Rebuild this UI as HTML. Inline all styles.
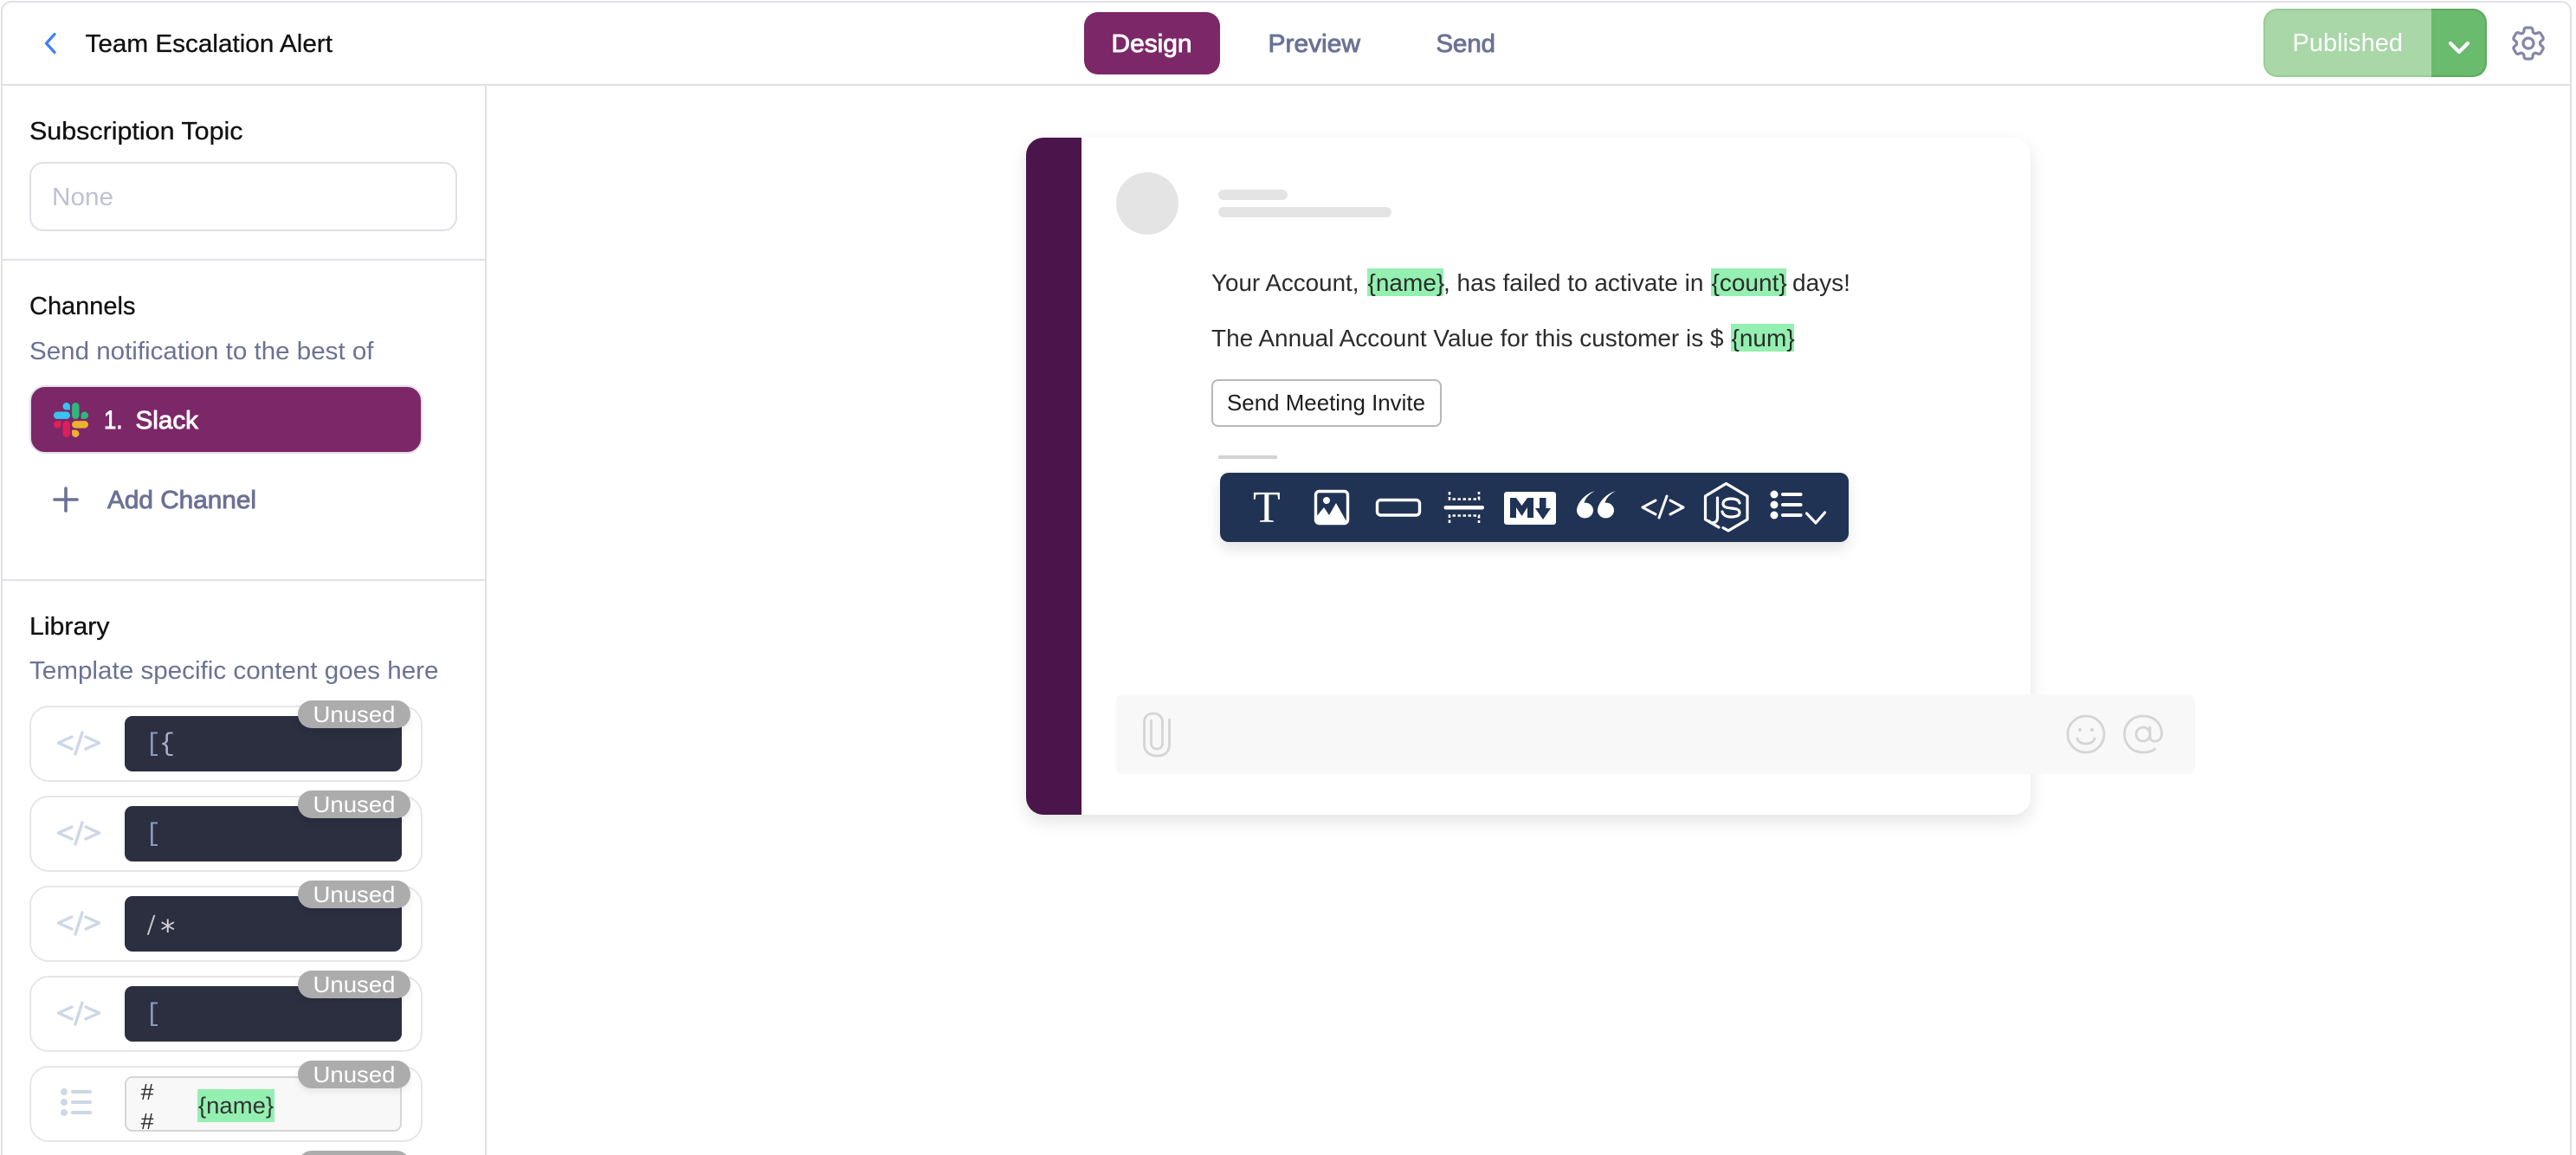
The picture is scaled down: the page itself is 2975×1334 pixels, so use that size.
<!DOCTYPE html>
<html lang="en">
<head>
<meta charset="utf-8">
<title>Team Escalation Alert</title>
<style>
html,body{margin:0;padding:0;background:#fff;width:2975px;height:1334px;overflow:hidden}
.a{position:absolute;box-sizing:border-box}
#root{position:relative;width:2975px;height:1334px;overflow:hidden;background:#fff}
.c{left:34px;width:454px;height:88px;border:2px solid #e6e6e8;border-radius:22px;background:#fff}
.d{left:144px;width:320px;height:64px;background:#2b2f40;border-radius:9px}
.b{left:344px;width:130px;height:32px;background:#acacac;border-radius:16px;box-shadow:0 4px 8px rgba(0,0,0,.08)}
svg text{font-family:"Liberation Sans",sans-serif}
.m{font-family:"Liberation Mono",monospace !important}
.reg{stroke:currentColor;stroke-width:.3}
.med{stroke:currentColor;stroke-width:.9}
</style>
</head>
<body>
<div id="root">
  <!-- app frame -->
  <div class="a" style="left:1px;top:1px;width:2969px;height:1333px;border:2px solid #e0e0e8;border-bottom:0;border-radius:12px 12px 0 0"></div>
  <div class="a" style="left:2px;top:97px;width:2967px;height:2px;background:#e0e0e8"></div>
  <div class="a" style="left:560px;top:98px;width:2px;height:1236px;background:#e0e0e8"></div>
  <div class="a" style="left:2px;top:299px;width:558px;height:2px;background:#e0e0e8"></div>
  <div class="a" style="left:2px;top:669px;width:558px;height:2px;background:#e0e0e8"></div>

  <!-- header -->
  <div class="a" style="left:1252px;top:14px;width:157px;height:72px;background:#7c2767;border-radius:16px"></div>
  <div class="a" style="left:2614px;top:10px;width:195px;height:79px;background:#a9d7a8;border:2px solid #97cd97;border-right:0;border-radius:16px 0 0 16px"></div>
  <div class="a" style="left:2808px;top:10px;width:64px;height:79px;background:#6abb6d;border:2px solid #5eaa60;border-left:0;border-radius:0 16px 16px 0"></div>

  <!-- sidebar -->
  <div class="a" style="left:34px;top:187px;width:494px;height:80px;border:2px solid #e0e0e8;border-radius:16px"></div>
  <div class="a" style="left:34px;top:445px;width:454px;height:79px;background:#7c2767;border:2px solid #e0e0e8;border-radius:18px"></div>

  <div class="a c" style="top:815px"></div>
  <div class="a c" style="top:919px"></div>
  <div class="a c" style="top:1023px"></div>
  <div class="a c" style="top:1127px"></div>
  <div class="a c" style="top:1231px"></div>
  <div class="a d" style="top:827px"></div>
  <div class="a d" style="top:931px"></div>
  <div class="a d" style="top:1035px"></div>
  <div class="a d" style="top:1139px"></div>
  <div class="a" style="left:144px;top:1243px;width:320px;height:64px;background:#f8f8f8;border:2px solid #d6d6d6;border-radius:9px"></div>
  <div class="a" style="left:228px;top:1258px;width:89px;height:38px;background:#93f0b0"></div>
  <div class="a b" style="top:809px"></div>
  <div class="a b" style="top:913px"></div>
  <div class="a b" style="top:1017px"></div>
  <div class="a b" style="top:1121px"></div>
  <div class="a b" style="top:1225px"></div>
  <div class="a" style="left:340px;top:1329px;width:140px;height:5px;overflow:hidden">
    <div class="a" style="left:4px;top:0;width:130px;height:32px;background:#acacac;border-radius:16px"></div>
  </div>

  <!-- slack card -->
  <div class="a" style="left:1185px;top:159px;width:1160px;height:782px;background:#fff;border-radius:20px;box-shadow:0 8px 20px rgba(0,0,0,.11)">
    <div class="a" style="left:0;top:0;width:64px;height:782px;background:#4a154b;border-radius:20px 0 0 20px"></div>
    <div class="a" style="left:104px;top:40px;width:72px;height:72px;background:#e4e4e4;border-radius:50%"></div>
    <div class="a" style="left:222px;top:60px;width:80px;height:12px;background:#e4e4e4;border-radius:6px"></div>
    <div class="a" style="left:222px;top:80px;width:200px;height:12px;background:#e4e4e4;border-radius:6px"></div>
  </div>
  <div class="a" style="left:1579px;top:310px;width:88px;height:32px;background:#93f0b0"></div>
  <div class="a" style="left:1976px;top:310px;width:87px;height:32px;background:#93f0b0"></div>
  <div class="a" style="left:1999px;top:374px;width:73px;height:32px;background:#93f0b0"></div>
  <div class="a" style="left:1399px;top:438px;width:266px;height:55px;border:2px solid #b8b8b8;border-radius:8px;background:#fff"></div>
  <div class="a" style="left:1407px;top:526px;width:68px;height:4px;background:#d4d4d4"></div>
  <div class="a" style="left:1409px;top:546px;width:726px;height:80px;background:#203354;border-radius:10px;box-shadow:0 8px 16px rgba(0,0,0,.11)"></div>
  <div class="a" style="left:1289px;top:802px;width:1246px;height:92px;background:#f8f8f8;border-radius:8px"></div>

  <svg class="a" style="left:0;top:0;display:block" width="2975" height="1334" viewBox="0 0 2975 1334" xmlns="http://www.w3.org/2000/svg">
    <!-- header -->
    <path d="M63 39.5 53.5 50 63 60.5" fill="none" stroke="#3b82f6" stroke-width="3.2" stroke-linecap="round" stroke-linejoin="round"/>
    <g style="color:#111"><text class="reg" x="98.500" y="60" font-size="29" fill="#111" textLength="285.500" lengthAdjust="spacingAndGlyphs">Team Escalation Alert</text></g>
    <g style="color:#fff"><text class="med" x="1283.500" y="60" font-size="29" fill="#fff" textLength="93" lengthAdjust="spacingAndGlyphs">Design</text></g>
    <g style="color:#6b7294">
      <text class="med" x="1464.500" y="60" font-size="29" fill="#6b7294" textLength="106.500" lengthAdjust="spacingAndGlyphs">Preview</text>
      <text class="med" x="1658.500" y="60" font-size="29" fill="#6b7294" textLength="68.500" lengthAdjust="spacingAndGlyphs">Send</text>
    </g>
    <text x="2647.500" y="59" font-size="29" fill="#fff" textLength="127.500" lengthAdjust="spacingAndGlyphs">Published</text>
    <path d="M2830 50 2840 60 2850 50" fill="none" stroke="#fff" stroke-width="4.2" stroke-linecap="round" stroke-linejoin="round"/>
    <g transform="translate(2896 26) scale(2)" fill="none" stroke="#8586a8" stroke-width="1.6" stroke-linecap="round" stroke-linejoin="round">
      <path d="M9.594 3.94c.09-.542.56-.94 1.11-.94h2.593c.55 0 1.02.398 1.11.94l.213 1.281c.063.374.313.686.645.87.074.04.147.083.22.127.324.196.72.257 1.075.124l1.217-.456a1.125 1.125 0 011.37.49l1.296 2.247a1.125 1.125 0 01-.26 1.431l-1.003.827c-.293.24-.438.613-.431.992a6.759 6.759 0 010 .255c-.007.378.138.75.43.99l1.005.828c.424.35.534.954.26 1.43l-1.298 2.247a1.125 1.125 0 01-1.369.491l-1.217-.456c-.355-.133-.75-.072-1.076.124a6.57 6.57 0 01-.22.128c-.331.183-.581.495-.644.869l-.213 1.28c-.09.543-.56.941-1.11.941h-2.594c-.55 0-1.02-.398-1.11-.94l-.213-1.281c-.062-.374-.312-.686-.644-.87a6.52 6.52 0 01-.22-.127c-.325-.196-.72-.257-1.076-.124l-1.217.456a1.125 1.125 0 01-1.369-.49l-1.297-2.247a1.125 1.125 0 01.26-1.431l1.004-.827c.292-.24.437-.613.43-.992a6.932 6.932 0 010-.255c.007-.378-.138-.75-.43-.99l-1.004-.828a1.125 1.125 0 01-.26-1.43l1.297-2.247a1.125 1.125 0 011.37-.491l1.216.456c.356.133.751.072 1.076-.124.072-.044.146-.087.22-.128.332-.183.582-.495.644-.869l.214-1.281z"/>
      <circle cx="12" cy="12" r="3"/>
    </g>

    <!-- sidebar text -->
    <g style="color:#111">
      <text class="reg" x="34" y="161" font-size="29" fill="#111" textLength="246.500" lengthAdjust="spacingAndGlyphs">Subscription Topic</text>
      <text class="reg" x="34" y="363" font-size="29" fill="#111" textLength="122.500" lengthAdjust="spacingAndGlyphs">Channels</text>
      <text class="reg" x="34" y="733" font-size="29" fill="#111" textLength="92.500" lengthAdjust="spacingAndGlyphs">Library</text>
    </g>
    <text x="60" y="237" font-size="29" fill="#bfc0d4" textLength="71" lengthAdjust="spacingAndGlyphs">None</text>
    <text x="34" y="415" font-size="29" fill="#6b7294" textLength="397.500" lengthAdjust="spacingAndGlyphs">Send notification to the best of</text>

    <g transform="translate(62 465) scale(.3257)">
      <path fill="#e01e5a" d="M25.8 77.6c0 7.1-5.8 12.9-12.9 12.9S0 84.7 0 77.6s5.8-12.9 12.9-12.9h12.9v12.9zM32.3 77.6c0-7.1 5.8-12.9 12.9-12.9s12.9 5.8 12.9 12.9v32.3c0 7.1-5.8 12.9-12.9 12.9s-12.9-5.8-12.9-12.9V77.6z"/>
      <path fill="#36c5f0" d="M45.2 25.8c-7.1 0-12.9-5.8-12.9-12.9S38.1 0 45.2 0s12.9 5.8 12.9 12.9v12.9H45.2zM45.2 32.3c7.1 0 12.9 5.8 12.9 12.9s-5.8 12.9-12.9 12.9H12.9C5.8 58.1 0 52.3 0 45.2s5.8-12.9 12.9-12.9h32.3z"/>
      <path fill="#2eb67d" d="M97 45.2c0-7.1 5.8-12.9 12.9-12.9s12.9 5.8 12.9 12.9-5.8 12.9-12.9 12.9H97V45.2zM90.5 45.2c0 7.1-5.8 12.9-12.9 12.9s-12.9-5.8-12.9-12.9V12.9C64.7 5.8 70.5 0 77.6 0s12.9 5.8 12.9 12.9v32.3z"/>
      <path fill="#ecb22e" d="M77.6 97c7.1 0 12.9 5.8 12.9 12.9s-5.8 12.9-12.9 12.9-12.9-5.8-12.9-12.9V97h12.9zM77.6 90.5c-7.1 0-12.9-5.8-12.9-12.9s5.8-12.9 12.9-12.9h32.3c7.1 0 12.9 5.8 12.9 12.9s-5.8 12.9-12.9 12.9H77.6z"/>
    </g>
    <g style="color:#fff">
      <text class="med" x="120" y="495" font-size="30" fill="#fff" textLength="21.500" lengthAdjust="spacingAndGlyphs">1.</text>
      <text class="med" x="156.500" y="495" font-size="29" fill="#fff" textLength="72.500" lengthAdjust="spacingAndGlyphs">Slack</text>
    </g>
    <path d="M76 564V590M63 577H89" fill="none" stroke="#6b7294" stroke-width="3.6" stroke-linecap="round"/>
    <g style="color:#6b7294"><text class="med" x="124" y="587" font-size="29" fill="#6b7294" textLength="172" lengthAdjust="spacingAndGlyphs">Add Channel</text></g>

    <text x="34" y="784" font-size="29" fill="#6b7294" textLength="472.500" lengthAdjust="spacingAndGlyphs">Template specific content goes here</text>

    <!-- code icons -->
    <g fill="none" stroke="#cdd7e5" stroke-width="3.4" stroke-linecap="round" stroke-linejoin="round">
      <path d="M83 851 67.500 858 83 865M95 846 87 871M99 851 114.500 858 99 865"/>
      <path d="M83 955 67.500 962 83 969M95 950 87 975M99 955 114.500 962 99 969"/>
      <path d="M83 1059 67.500 1066 83 1073M95 1054 87 1079M99 1059 114.500 1066 99 1073"/>
      <path d="M83 1163 67.500 1170 83 1177M95 1158 87 1183M99 1163 114.500 1170 99 1177"/>
    </g>
    <!-- list icon -->
    <g fill="#cdd7e5">
      <circle cx="74" cy="1261" r="4"/><circle cx="74" cy="1273" r="4"/><circle cx="74" cy="1285" r="4"/>
      <rect x="82" y="1259" width="24" height="4" rx="2"/><rect x="82" y="1271" width="24" height="4" rx="2"/><rect x="82" y="1283" width="24" height="4" rx="2"/>
    </g>
    <!-- code text -->
    <text class="m" x="168" y="867" font-size="30" fill="#8d98bf">[<tspan x="184" fill="#a8b0c8">{</tspan></text>
    <text class="m" x="168" y="971" font-size="30" fill="#8d98bf">[</text>
    <text class="m" transform="translate(169 1079) scale(.6 1)" font-size="31" fill="#c9c9c9" stroke="#c9c9c9" stroke-width=".6">/</text>
    <text x="183.500" y="1086.500" font-size="34" fill="#d4d4d4" style="font-family:'DejaVu Sans Mono',monospace">*</text>
    <text class="m" x="168" y="1179" font-size="30" fill="#8d98bf">[</text>
    <text class="m" x="162" y="1270" font-size="27" fill="#2c2c2c">#</text>
    <text class="m" x="162" y="1304" font-size="27" fill="#2c2c2c">#</text>
    <text x="229" y="1286" font-size="27" fill="#333" textLength="87" lengthAdjust="spacingAndGlyphs">{name}</text>

    <g fill="#fff" font-size="26">
      <text x="361.500" y="834" textLength="95" lengthAdjust="spacingAndGlyphs">Unused</text>
      <text x="361.500" y="938" textLength="95" lengthAdjust="spacingAndGlyphs">Unused</text>
      <text x="361.500" y="1042" textLength="95" lengthAdjust="spacingAndGlyphs">Unused</text>
      <text x="361.500" y="1146" textLength="95" lengthAdjust="spacingAndGlyphs">Unused</text>
      <text x="361.500" y="1250" textLength="95" lengthAdjust="spacingAndGlyphs">Unused</text>
    </g>

    <!-- message -->
    <g font-size="28" fill="#2c2c2c">
      <text x="1399" y="336" textLength="170.500" lengthAdjust="spacingAndGlyphs">Your Account,</text>
      <text x="1579.500" y="336">{name}</text>
      <text x="1667" y="336">, has failed to activate in</text>
      <text x="1976.500" y="336">{count}</text>
      <text x="2070" y="336">days!</text>
      <text x="1399" y="400" textLength="591.500" lengthAdjust="spacingAndGlyphs">The Annual Account Value for this customer is $</text>
      <text x="1999.500" y="400">{num}</text>
    </g>
    <text x="1417" y="474" font-size="26" fill="#1d1d1d" textLength="229" lengthAdjust="spacingAndGlyphs">Send Meeting Invite</text>

    <!-- toolbar icons -->
    <text x="1447" y="603" font-size="52" fill="#fff" style="font-family:'Liberation Serif',serif">T</text>
    <!-- image -->
    <rect x="1519.500" y="567.500" width="37" height="37" rx="4" fill="none" stroke="#fff" stroke-width="3.400"/>
    <circle cx="1532" cy="578" r="4" fill="#fff"/>
    <path d="M1520 604V597L1529 586 1535 595 1543 581 1556 604Z" fill="#fff"/>
    <!-- button -->
    <rect x="1590.500" y="577.500" width="49" height="17.500" rx="4" fill="none" stroke="#fff" stroke-width="3.400"/>
    <!-- divider -->
    <rect x="1667.500" y="584" width="46.500" height="4.500" rx="2.200" fill="#fff"/>
    <path d="M1674 568V576.500H1708V568M1674 604V595.500H1708V604" fill="none" stroke="#fff" stroke-width="2.600" stroke-dasharray="3.500 2.500"/>
    <!-- markdown -->
    <path fill="#fff" fill-rule="evenodd" d="M1740 568H1794a3 3 0 0 1 3 3V603a3 3 0 0 1-3 3H1740a3 3 0 0 1-3-3V571a3 3 0 0 1 3-3ZM1744 598V575H1751L1757.500 584 1764 575H1771V598H1764V586L1757.500 596 1751 586V598ZM1778 575V587H1773L1782 600 1791 587H1785.500V575Z"/>
    <!-- quote -->
    <g fill="#fff">
      <path d="M1842 567C1829 571 1821 582 1821 590A9.500 9 0 1 0 1835 581.500C1832 580.500 1830.500 580.500 1829.500 581C1831 575 1835 571 1842 567Z"/>
      <path d="M1866 567C1853 571 1845 582 1845 590A9.500 9 0 1 0 1859 581.500C1856 580.500 1854.500 580.500 1853.500 581C1855 575 1859 571 1866 567Z"/>
    </g>
    <!-- code -->
    <path d="M1912 578 1897 586 1912 594M1925 573 1916 598M1929 578 1944 586 1929 594" fill="none" stroke="#fff" stroke-width="3" stroke-linecap="round" stroke-linejoin="round"/>
    <!-- js -->
    <g fill="none" stroke="#fff" stroke-width="3.200" stroke-linecap="round" stroke-linejoin="round">
      <path d="M1985 609 1969.500 600V573L1993.500 558.500 2018 573V600L1996 613 1990 609.500"/>
      <path d="M1983.500 575V598C1983.500 604 1977 605.500 1974 602"/>
      <path d="M2009 581C2008 577 2003 576 1999 576 1994 576 1990 578 1990 582 1990 590 2009 584 2009 592 2009 596 2004 597 1999 597 1994 597 1990 595 1989 591"/>
    </g>
    <!-- checklist -->
    <g fill="#fff">
      <circle cx="2049" cy="571" r="4.500"/><circle cx="2049" cy="583" r="4.500"/><circle cx="2049" cy="595" r="4.500"/>
      <rect x="2057" y="569" width="24.500" height="4" rx="2"/><rect x="2057" y="581" width="24.500" height="4" rx="2"/><rect x="2057" y="593" width="24.500" height="4" rx="2"/>
    </g>
    <path d="M2086.500 593 2097 604 2107.500 592" fill="none" stroke="#fff" stroke-width="3.200" stroke-linecap="round" stroke-linejoin="round"/>

    <!-- composer icons -->
    <g fill="none" stroke="#d5d5d5" stroke-width="2.800" stroke-linecap="round">
      <path d="M1350.500 831V860C1350.500 869 1344.500 873 1336.500 873 1327.500 873 1321.500 868 1321.500 860V834C1321.500 827 1326.500 824 1331.500 824 1337.500 824 1342.500 827 1342.500 834V858C1342.500 863 1339.500 865 1336 865 1332.500 865 1329.500 863 1329.500 858V832"/>
      <circle cx="2409" cy="848" r="21"/>
      <path d="M2399 853C2401 861 2417 861 2419 853"/>
      <circle cx="2475" cy="848" r="8"/>
      <path d="M2483 840V852C2483 858 2496.500 858 2496.500 848 2496.500 834 2486.500 827 2475 827 2461.500 827 2453.500 837 2453.500 848 2453.500 860 2462.500 869 2475 869 2480.500 869 2485.500 868 2488.500 865"/>
    </g>
    <circle cx="2402" cy="843" r="2" fill="#d5d5d5"/><circle cx="2416" cy="843" r="2" fill="#d5d5d5"/>
  </svg>
</div>
</body>
</html>
